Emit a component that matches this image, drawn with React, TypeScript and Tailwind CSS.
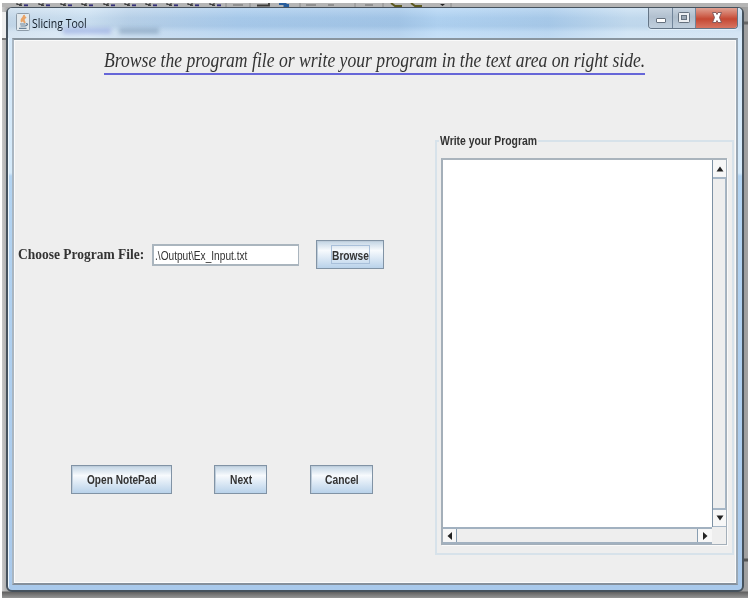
import { useLayoutEffect, useRef } from "react";

/** A line of text condensed horizontally to a given width. */
function Fit({ width, className = "", children }: { width: number; className?: string; children: string }) {
  const ref = useRef<HTMLSpanElement>(null);
  useLayoutEffect(() => {
    const el = ref.current;
    if (el) el.style.transform = `scaleX(${width / el.offsetWidth})`;
  }, [width]);
  return (
    <span className="block shrink-0" style={{ width }}>
      <span ref={ref} className={`block w-max origin-left whitespace-nowrap ${className}`}>
        {children}
      </span>
    </span>
  );
}

function Button({ text, width, className, focused = false }: { text: string; width: number; className: string; focused?: boolean }) {
  return (
    <button
      className={`flex h-[29px] shrink-0 items-center justify-center border border-[#8193a5] bg-linear-to-b from-[#c9d9e7] from-5% via-[#f7fafd] via-35% to-[#b9d2ea] shadow-[inset_1px_1px_0_#becddb] ${className}`}
    >
      <span className={focused ? "flex h-[19px] items-center border border-[#a9c0da] pt-px" : "flex h-[19px] items-center pb-px"}>
        <Fit width={width} className="text-[13px] leading-[17px] font-bold text-[#333]">{text}</Fit>
      </span>
    </button>
  );
}

function Arrow({ dir }: { dir: "up" | "down" | "left" | "right" }) {
  const paths = { up: "M.5 6.500 4 1.500 7.500 6.500Z", down: "M.5 1.500h7L4 6.500Z", left: "M1.500 4 6 0V8Z", right: "M2 0 6.500 4 2 8Z" };
  return (
    <svg className="h-2 w-2 shrink-0" viewBox="0 0 8 8">
      <path d={paths[dir]} fill="#222" />
    </svg>
  );
}

function JavaIcon() {
  return (
    <svg className="mt-[5px] h-[18px] w-[14px] shrink-0" viewBox="0 0 14 18">
      <rect x=".5" y=".5" width="13" height="17" rx="1" fill="#e3e9ed" stroke="#8d9ba8" />
      <path d="M8 2c1 3-4 3-2 7M10 4c-3 2-3 3-1 6" fill="none" stroke="#e9a366" strokeWidth="2" />
      <path d="M4 11h5.500M4.500 13h4.500M3 15.300h7.500M10 10.500c3 0 1 2-1 2.500" fill="none" stroke="#6b8298" strokeWidth="1.200" />
    </svg>
  );
}

function ToolbarStrip() {
  const digits = [17, 39, 61, 82, 104, 125, 146, 167, 188, 210];
  return (
    <svg className="block h-[4px] w-[746px]" viewBox="2 3 746 4">
      <path d="M2 3H748V7H2Z" fill="#b5b5b5" />
      {digits.map((x) => (
        <g key={x}>
          <path d={`M${x} 3v1.500h4V3M${x + 2} 5.500h3`} fill="none" stroke="#444" strokeWidth="1.200" />
          <path d={`M${x + 7} 5.300h4`} stroke="#353079" strokeWidth="1.800" />
        </g>
      ))}
      <path d="M226 3v4M250 3v4M300 3v4M355 3v4M383 3v4M451 3v4" stroke="#8c8c8c" />
      <path d="M257 5.500h12V3" fill="none" stroke="#3e3d3a" strokeWidth="1.800" />
      <path d="M279 3.500h6v2h4" fill="none" stroke="#285d9c" strokeWidth="3" />
      <path d="M233 5h10M306 5h10M328 5h6M365 5h8" stroke="#858585" strokeWidth="1.500" />
      <path d="M391 3l4 3h7M411 3l4 3h7" fill="none" stroke="#5d5a20" strokeWidth="2" />
      <path d="M440 4h5l-2.500 2Z" fill="#222" />
    </svg>
  );
}

function WindowControls() {
  return (
    <div className="flex h-[21px] w-[90px] shrink-0 overflow-hidden rounded-b-[4px] border border-t-0 border-[#647586] shadow-[0_1px_1px_#e7f3fc]">
      <div className="flex w-[24px] justify-center border-r border-[#71859a] bg-linear-to-b from-[#c7d3df] via-[#b1c0cf] via-45% to-[#c0cfdd]">
        <svg className="h-[19px] w-[12px]" viewBox="0 0 12 19"><rect x="1.500" y="10.500" width="9" height="4" rx=".5" fill="#fff" stroke="#65717e" /></svg>
      </div>
      <div className="flex w-[23px] justify-center border-r border-[#71859a] bg-linear-to-b from-[#c7d3df] via-[#aebdcb] via-45% to-[#c0cfdd]">
        <svg className="h-[19px] w-[12px]" viewBox="0 0 12 19">
          <rect x=".5" y="4.500" width="11" height="10" rx="1" fill="#eceff2" stroke="#65717e" />
          <rect x="3.500" y="7.500" width="5" height="4" fill="#9da9b5" stroke="#65717e" />
        </svg>
      </div>
      <div className="flex grow justify-center bg-linear-to-b from-[#dfa092] via-[#c54833] via-55% to-[#d77562]">
        <svg className="h-[19px] w-[12px]" viewBox="0 0 12 19">
          <path d="M1.500 4.500h3.500l1 2 1-2h3.500L8.500 9.500l2 5H7l-1-2-1 2H1.500l2-5Z" fill="#fff" stroke="#7b5356" strokeWidth=".9" />
        </svg>
      </div>
    </div>
  );
}

function ProgramArea() {
  return (
    <fieldset className="h-[423px] w-[299px] border-2 border-[#d7e2ea] pl-[4px]">
      <legend className="-ml-[2px] h-[18px] px-px">
        <Fit width={97} className="text-[13px] leading-[18px] font-bold text-[#333]">Write your Program</Fit>
      </legend>
      <div className="mt-[8px] grid h-[387px] w-[286px] grid-cols-[1fr_14px] grid-rows-[1fr_17px] border border-t-2 border-l-2 border-[#a4afb9] border-t-[#aab4bd] bg-[#eee] shadow-[1px_1px_0_#fafafa]">
        <div className="bg-white" />
        <div className="flex flex-col border-l border-[#7d91a4]">
          <div className="flex h-[17px] items-center justify-center bg-[#f7f7f7]"><Arrow dir="up" /></div>
          <div className="grow border-y-2 border-r border-[#a6b6c6] bg-[#eee]" />
          <div className="flex h-[17px] items-center justify-center border-b border-[#a6b6c6] bg-[#f7f7f7]"><Arrow dir="down" /></div>
        </div>
        <div className="flex border-y-2 border-[#a2b1c0]">
          <div className="flex w-[13px] items-center justify-center bg-[#f7f7f7]"><Arrow dir="left" /></div>
          <div className="grow border-x border-[#889eb2] bg-[#eee]" />
          <div className="flex w-[14px] items-center justify-center bg-[#f7f7f7]"><Arrow dir="right" /></div>
        </div>
        <div className="bg-[#eee]" />
      </div>
    </fieldset>
  );
}

export default function App() {
  return (
    <div className="h-[599px] w-[750px] overflow-hidden bg-white pt-[3px] pl-[2px] font-['Liberation_Sans',Arial,sans-serif]">
      <div className="h-[595px] w-[746px] bg-[linear-gradient(to_right,#c9c9c9_0,#aaa_5px,#999_738px,#a3a3a3)]">
        <ToolbarStrip />
        <div className="flex h-[591px] bg-[linear-gradient(to_bottom,transparent_584px,#606060_585px,#969696_591px)]">
          <div className="w-[4px] shrink-0 bg-[linear-gradient(to_bottom,transparent_5px,#eee_5px_31px,#777_31px_33px,transparent_33px)]" />
          <main className="h-[585px] w-[738px] shrink-0 rounded-[6px] border-2 border-t-1 border-[#46525d] bg-[linear-gradient(to_bottom,#d4e7f8_0,#d5eafa_165px,#b2d3f1_168px,#a9c9eb_100%)] shadow-[inset_1px_1px_0_#edf7fe]">
            <header className="flex h-[30px] rounded-t-[4px] bg-[linear-gradient(to_bottom,#ffffff33_0,#7898b818_10px,#7898b820_18px,#ffffff30_24px,#ffffff40_30px),linear-gradient(to_right,#cbdded_0,#d2e5f5_80px,#bdd5ec_120px,#abcdee_230px,#a5c8ea_390px,#b4d6f5_430px,#abcded_540px,#c8dff2_620px,#c9def1_100%)] pl-[8px]">
              <JavaIcon />
              <div className="mt-[6px] ml-[2px] w-[55px] shrink-0">
                <Fit width={55} className="font-['Open_Sans',sans-serif] text-[13px] leading-[18px] text-[#111b25]">Slicing Tool</Fit>
              </div>
              <div className="mt-[20px] -ml-[24px] h-[6px] w-[48px] shrink-0 bg-[#8698dc]/50 blur-[2px]" />
              <div className="mt-[20px] ml-[8px] h-[6px] w-[40px] shrink-0 bg-[#7290ad]/50 blur-[2px]" />
              <div className="mr-[4px] ml-auto"><WindowControls /></div>
            </header>
            <section className="ml-[4px] h-[547px] w-[726px] border-2 border-r-[#9aa8b5] border-b-[#85909c] border-l-[#a9b6c2] border-t-[#89959f] bg-[#eee] shadow-[inset_1px_1px_0_#fafafa,inset_-1px_-1px_0_#fafafa]">
              <div className="ml-[90px] h-[35px] w-[541px] border-b-2 border-[#6666d8] pt-[8px]">
                <Fit width={541} className="font-['Liberation_Serif',serif] text-[20px] leading-[24px] text-[#333] italic">Browse the program file or write your program in the text area on right side.</Fit>
              </div>
              <div className="flex pt-[57px]">
                <div className="w-[421px] shrink-0">
                  <div className="flex items-center pt-[108px] pl-[4px]">
                    <div className="-mt-[2px]">
                      <Fit width={126} className="font-['Liberation_Serif',serif] text-[15.500px] leading-[22px] font-bold text-[#333]">Choose Program File:</Fit>
                    </div>
                    <div className="ml-[8px] h-[22px] w-[147px] shrink-0 border-2 border-r border-[#aab5be] bg-white pt-[3px] pl-px">
                      <Fit width={92} className="text-[12px] leading-[15px] text-[#333]">.\Output\Ex_Input.txt</Fit>
                    </div>
                    <Button text="Browse" width={37} className="ml-[17px] w-[68px]" focused />
                  </div>
                  <div className="flex pt-[196px] pl-[57px]">
                    <Button text="Open NotePad" width={70} className="w-[101px]" />
                    <Button text="Next" width={22} className="ml-[42px] w-[53px]" />
                    <Button text="Cancel" width={34} className="ml-[43px] w-[63px]" />
                  </div>
                </div>
                <ProgramArea />
              </div>
            </section>
          </main>
          <div className="w-[4px] shrink-0 bg-[linear-gradient(to_bottom,transparent_14px,#666_15px_17px,transparent_18px_551px,#555_552px_554px,transparent_555px)]" />
        </div>
      </div>
    </div>
  );
}
